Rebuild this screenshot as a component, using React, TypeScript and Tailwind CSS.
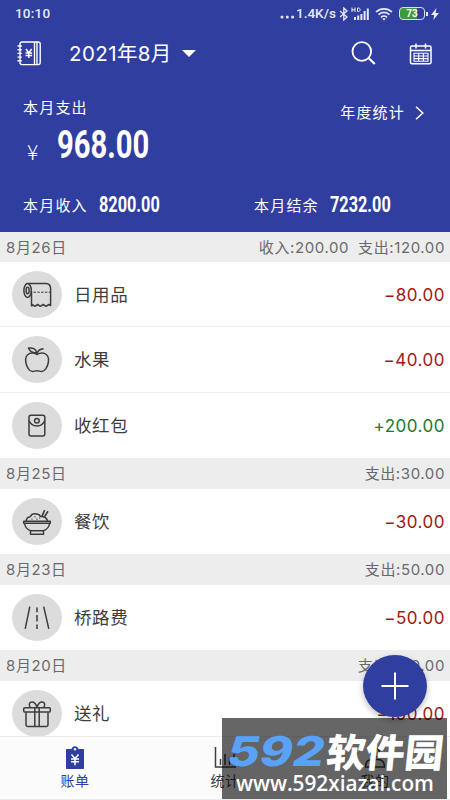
import React from 'react';

type IconName = 'tissue' | 'apple' | 'packet' | 'rice' | 'road' | 'gift';

interface Entry {
  icon: IconName;
  name: string;
  amount: string;
}

interface Day {
  date: string;
  income?: string;
  expense: string;
  height: string;
  entries: Entry[];
}

const days: Day[] = [
  {
    date: '8月26日',
    income: '收入:200.00',
    expense: '支出:120.00',
    height: 'h-[30px]',
    entries: [
      { icon: 'tissue', name: '日用品', amount: '−80.00' },
      { icon: 'apple', name: '水果', amount: '−40.00' },
      { icon: 'packet', name: '收红包', amount: '+200.00' },
    ],
  },
  { date: '8月25日', expense: '支出:30.00', height: 'h-[31px]', entries: [{ icon: 'rice', name: '餐饮', amount: '−30.00' }] },
  { date: '8月23日', expense: '支出:50.00', height: 'h-[31px]', entries: [{ icon: 'road', name: '桥路费', amount: '−50.00' }] },
  { date: '8月20日', expense: '支出:100.00', height: 'h-[31px]', entries: [{ icon: 'gift', name: '送礼', amount: '−100.00' }] },
];

const icons: Record<IconName, React.ReactNode> = {
  tissue: (
    <>
      <ellipse cx="15.6" cy="19.5" rx="3.7" ry="7" />
      <ellipse cx="15.6" cy="19.5" rx="1.5" ry="3.2" />
      <path d="M15.6 12.5H34c3.2 0 4.6 2 4.6 5.500V34.500l-1.800-1-2.800 1.800-2.800-1.800-2.800 1.800-2.800-1.800-2.800 1.800-2-1.500-1.300 1V20" />
      <path d="M21.500 21.200H38" strokeDasharray="2.500 1.300" strokeWidth="1" />
    </>
  ),
  apple: (
    <>
      <path d="M24.800 18.500c-2-1.400-4.700-2-7-1.100-3.500 1.300-4.600 4.900-4 8.800.7 4.700 3.600 9.200 6.600 9.300 1.700.1 2.600-.8 4.600-.8s3 .9 4.700.8c3-.1 6-4.600 6.700-9.300.6-3.900-.6-7.500-4-8.800-2.300-.9-5.200-.300-7.600 1.100Z" />
      <path d="M24.800 18.500c.5-3.400 3-5.500 6.800-5.700" />
      <path d="M24.500 16.500c-.2-3.200-3.200-5-8-4.400 1.200 3.300 4.400 5 8 4.400Z" />
    </>
  ),
  packet: (
    <>
      <rect x="17" y="13.200" width="15.800" height="20.800" rx="2" />
      <path d="M17 18.500c1.500 3.700 4.300 5.500 7.900 5.500s6.400-1.800 7.900-5.500" />
      <circle cx="24.900" cy="18.800" r="2.300" />
    </>
  ),
  rice: (
    <>
      <path d="M11.700 23.300h26.600v2H11.700zM12.500 25.500c.6 3.700 3 6.200 6.400 7.300h12.300c3.400-1.100 5.800-3.600 6.400-7.300M18.500 33v3.300h13V33" />
      <path d="M14.200 23c.2-2.500 1.800-4 4-4.300.8-2 2.800-2.900 5-2.900s4.200.8 5.200 2.500c3.500.2 6.500 1.700 7.200 4.700" />
      <path d="M30 18.200l2.700-6M32.400 18.800l3.700-5.500" strokeWidth="1.600" />
      <path d="M19.500 21.300h.9M22.500 18.800h.9M24.500 21.300h.9M27.300 20h.9" />
    </>
  ),
  road: (
    <>
      <path d="M17.800 12.700L13.200 34.800M31.700 12.700L36.800 34.800" />
      <path d="M25 13.500v4.800M25 21v6.500M25 30.500V35" />
    </>
  ),
  gift: (
    <>
      <rect x="11.700" y="17.800" width="26.600" height="4.300" rx="1" />
      <path d="M14 22.300v12.500c0 1 .6 1.600 1.600 1.600h18.800c1 0 1.600-.6 1.600-1.600V22.300M22.800 18v18.400M27.200 18v18.400" />
      <path d="M25 17.500c-1-3.300-2.900-5.400-5-5.400-3 0-3.500 3.700-1.500 5.600M25 17.500c1-3.300 2.900-5.400 5-5.400 3 0 3.500 3.700 1.500 5.600" />
    </>
  ),
};

const EntryRow = ({ icon, name, amount }: Entry) => (
  <div className="flex h-[65.300px] shrink-0 items-center border-b border-[#efefef] bg-white pl-3 pr-[5px] last:h-[65px] last:border-b-0">
    <div className="h-[47px] w-[50px] shrink-0 rounded-[50%] bg-[#dcdcdc]">
      <svg viewBox="0 0 50 47" className="h-full w-full" fill="none" stroke="#3c3c3c" strokeWidth="1.500" strokeLinejoin="round">
        {icons[icon]}
      </svg>
    </div>
    <span className="ml-3 flex-1 pt-[2px] text-[17.500px] tracking-[0.600px] text-[#3d3d3d]">{name}</span>
    <span className={`pt-[3px] font-['Inter'] text-[17px] tracking-[0.500px] ${amount.startsWith('+') ? 'text-[#1b7a2b]' : 'text-[#a01818]'}`}>{amount}</span>
  </div>
);

const DayGroup = ({ date, income, expense, height, entries }: Day) => (
  <section>
    <div className={`flex items-center bg-[#ededed] pl-[6px] pr-[5px] pt-[2px] font-['Inter','Noto_Sans_CJK_SC',sans-serif] text-[15px] tracking-[0.600px] text-[#6a6a6a] ${height}`}>
      <span className="flex-1">{date}</span>
      {income && <span className="mr-[9px]">{income}</span>}
      <span>{expense}</span>
    </div>
    <div>
      {entries.map((e) => (
        <EntryRow key={e.name} {...e} />
      ))}
    </div>
  </section>
);

const StatusBar = () => (
  <div className="flex h-[27px] items-center pl-[15px] pr-[11px] text-[#e8eaf8]">
    <span className="flex-1 text-[13.500px] font-medium tracking-[0.200px]">10:10</span>
    <svg viewBox="0 0 16 4" className="mt-[6px] h-1 w-4" fill="currentColor">
      <circle cx="2" cy="2" r="1.500" />
      <circle cx="7.300" cy="2" r="1.500" />
      <circle cx="12.600" cy="2" r="1.500" />
    </svg>
    <span className="w-[43px] whitespace-nowrap text-[13.500px] font-medium">1.4K/s</span>
    <svg viewBox="0 0 10 14" className="h-[14px] w-[10px]" fill="none" stroke="currentColor" strokeWidth="1.300">
      <path d="M1 4l7 6-3.200 3V1L8 4 1 10" />
    </svg>
    <svg viewBox="0 0 20 14" className="ml-[2px] h-[14px] w-5" fill="none" stroke="currentColor">
      <path d="M1 .5v4.500M4 .5v4.500M1 2.800h3M6.500 1v3.500h1c2.200 0 2.200-3.500 0-3.500z" strokeWidth="1" />
      <path d="M4 13v-3M7.200 13V8.500M10.400 13V7M13.600 13V4M16.800 13V1.500" strokeWidth="2" />
    </svg>
    <svg viewBox="0 0 18 14" className="ml-[4px] h-[14px] w-[18px]" fill="none" stroke="currentColor" strokeWidth="1.700">
      <path d="M1 5c4.500-4.300 11.500-4.300 16 0M3.500 7.700c3-3 8-3 11 0M6 10.300c1.700-1.600 4.300-1.600 6 0" />
      <path d="M7.300 12L9 13.600 10.700 12 9 11z" fill="currentColor" stroke="none" />
    </svg>
    <div className="ml-[6px] flex h-[13px] w-[26px] items-center justify-center rounded-[4px] border-[1.500px] border-[#d9dcf5] bg-linear-to-r from-[#3f9a3c] from-70% to-[#303f9f] to-70%">
      <span className="text-[10px] font-bold leading-none text-white">73</span>
    </div>
    <div className="ml-px h-1 w-[2px] bg-[#e8eaf8]" />
    <svg viewBox="0 0 8 12" className="ml-[3px] h-3 w-2" fill="currentColor">
      <path d="M5.500 0L0 7h3.200L2.400 12 8 5H4.600z" />
    </svg>
  </div>
);

const Header = () => (
  <header className="h-[232px] bg-[#303e9f] text-white">
    <StatusBar />
    <div className="flex h-[53px] items-center pl-[17px] pr-[17px]">
      <svg viewBox="0 0 24 25" className="h-[25px] w-6" fill="none" stroke="currentColor" strokeWidth="1.400">
        <rect x="3" y="1" width="20.200" height="22.600" rx="2" />
        <path d="M17.500 1v22.600M20 1v22.600M.5 5h4.300M.5 8.700h4.300M.5 12.400h4.300M.5 16.100h4.300M.5 19.800h4.300" />
        <path d="M9 8l2.800 4L14.600 8M11.800 12v5M8.500 12h6.600M8.500 14.500h6.600" strokeWidth="1.500" />
      </svg>
      <span className="ml-7 w-[103px] whitespace-nowrap pt-[2px] font-['Inter','Noto_Sans_CJK_SC',sans-serif] text-[20.500px] tracking-[0.400px]">2021年8月</span>
      <svg viewBox="0 0 14 7" className="ml-[10px] h-[7px] w-[14px]" fill="currentColor">
        <path d="M0 0h14L7 7z" />
      </svg>
      <div className="flex-1" />
      <svg viewBox="0 0 25 24" className="mb-[2px] h-6 w-[25px]" fill="none" stroke="currentColor" strokeWidth="1.800">
        <circle cx="10.800" cy="10.500" r="9.300" />
        <path d="M17.500 17l6.300 6" strokeWidth="2.200" />
      </svg>
      <svg viewBox="0 0 24 22" className="ml-[33px] h-[22px] w-6" fill="none" stroke="currentColor" strokeWidth="1.500">
        <rect x="1.500" y="3" width="20.500" height="17.800" rx="1.500" />
        <path d="M1.500 7.500h20.500M7 .5v5M16.500 .5v5" />
        <path d="M5 10.300h14v8H5zM5 13h14M5 15.600h14M9.700 10.300v8M14.300 10.300v8" strokeWidth="1.100" />
      </svg>
    </div>
    <div className="flex h-[102px] justify-between pl-[23px] pr-[26px]">
      <div className="pt-[18px]">
        <p className="text-[15px] leading-5 tracking-[1.200px]">本月支出</p>
        <div className="mt-[5px] flex h-11 items-center">
          <span className="w-[34px] pl-[4px] pt-[12px] font-['Noto_Sans_CJK_SC'] text-[21px] font-light leading-none">¥</span>
          <span className="w-[92px] origin-left scale-x-[.75] whitespace-nowrap text-[39px] font-bold leading-none">968.00</span>
        </div>
      </div>
      <div className="mt-[23px] flex h-5 items-center">
        <span className="text-[15px] tracking-[1.200px]">年度统计</span>
        <svg viewBox="0 0 9 14" className="ml-[10px] h-[14px] w-[9px]" fill="none" stroke="currentColor" strokeWidth="1.500">
          <path d="M1 .7L7.800 7 1 13.300" />
        </svg>
      </div>
    </div>
    <div className="flex h-[44px] items-center pl-[23px] text-[15px] tracking-[1.200px]">
      <span className="w-[76px] pt-[5px]">本月收入</span>
      <span className="w-[155px] origin-left scale-x-[.74] whitespace-nowrap text-[22px] font-bold tracking-normal">8200.00</span>
      <span className="w-[76px] pt-[5px]">本月结余</span>
      <span className="w-[80px] origin-left scale-x-[.74] whitespace-nowrap text-[22px] font-bold tracking-normal">7232.00</span>
    </div>
  </header>
);

const TabBar = () => (
  <nav className="absolute bottom-0 left-0 grid h-16 w-full grid-cols-3 border-y border-[#ececec] bg-[#fbfbfb] text-[14px] text-[#3d3d3d]">
    <div className="flex flex-col items-center pt-[9px] text-[#303e9f]">
      <svg viewBox="0 0 18 23" className="h-[23px] w-[18px]" fill="currentColor">
        <path d="M1 3h4.500C6 1.200 7.300.2 9 .2s3 1 3.500 2.800H17c.6 0 1 .4 1 1v18c0 .6-.4 1-1 1H1c-.6 0-1-.4-1-1V4c0-.6.4-1 1-1z" />
        <circle cx="9" cy="3.300" r="1.200" fill="#fff" />
        <path d="M5.500 8.500L9 12.700l3.500-4.200M9 12.700v6.600M5 13h8M5 15.800h8" fill="none" stroke="#fff" strokeWidth="1.500" />
      </svg>
      <span className="mt-[2px] tracking-[0.500px]">账单</span>
    </div>
    <div className="flex flex-col items-center pt-[9px]">
      <svg viewBox="0 0 22 23" className="h-[23px] w-[22px]" fill="none" stroke="currentColor" strokeWidth="1.500">
        <path d="M1.500 1v20H22M6.500 19v-6M11 19V8M15.500 19v-8M20 19V8" />
      </svg>
      <span className="mt-[2px] tracking-[0.500px]">统计</span>
    </div>
    <div className="flex flex-col items-center pt-[9px]">
      <svg viewBox="0 0 22 23" className="h-[23px] w-[22px]" fill="none" stroke="currentColor" strokeWidth="1.400">
        <circle cx="11" cy="6.500" r="4.500" />
        <path d="M1.500 21c0-5 3-7.500 7-7.500h5c4 0 7 2.500 7 7.500z" />
      </svg>
      <span className="mt-[2px] tracking-[0.500px]">我的</span>
    </div>
  </nav>
);

const Watermark = () => (
  <div className="absolute left-[222px] top-[718px] h-[81px] w-[225px] overflow-hidden bg-black/60 pt-[11px]">
    <div className="flex h-[42px] items-center pl-[6px] font-bold leading-none">
      <span className="w-[99px] origin-left -skew-x-10 scale-x-[1.220] whitespace-nowrap pt-[2px] font-['Inter'] text-[41px] font-extrabold text-[#5aa2f8]">592</span>
      <span className="origin-left -skew-x-6 whitespace-nowrap font-['Noto_Sans_CJK_SC'] text-[39px] font-black text-white">软件园</span>
    </div>
    <p className="pl-[14px] font-['Open_Sans'] text-[20.800px] font-semibold leading-6 text-white">www.592xiazai.com</p>
  </div>
);

const App = () => (
  <div className="relative h-[800px] w-[450px] overflow-hidden bg-white font-['Roboto','Noto_Sans_CJK_SC',sans-serif]">
    <Header />
    <main>
      {days.map((d) => (
        <DayGroup key={d.date} {...d} />
      ))}
    </main>
    <TabBar />
    <button className="absolute left-[363px] top-[655px] flex h-[62px] w-16 items-center justify-center rounded-[50%] bg-[#303e9f] shadow-[0_3px_6px_rgba(0,0,0,0.25)]">
      <svg viewBox="0 0 28 28" className="h-7 w-7" stroke="#fff" strokeWidth="2">
        <path d="M14 .5v27M.5 14h27" />
      </svg>
    </button>
    <Watermark />
  </div>
);

export default App;
